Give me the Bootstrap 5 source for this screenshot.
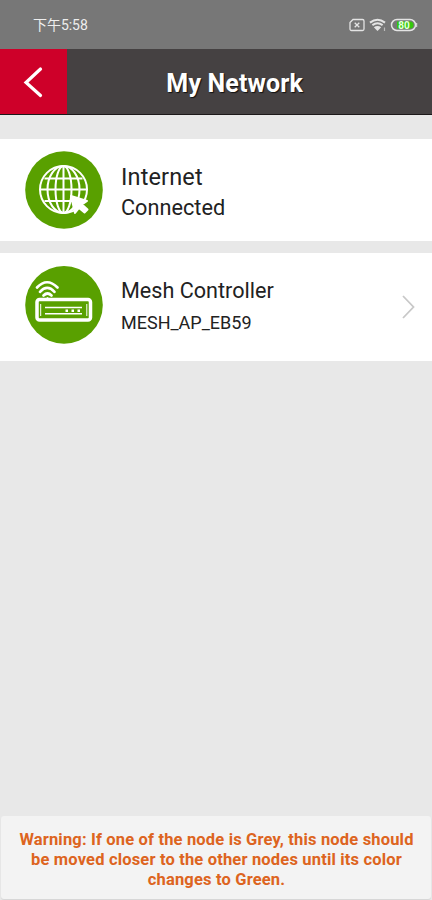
<!DOCTYPE html>
<html lang="en">
<head>
<meta charset="utf-8">
<meta name="viewport" content="width=device-width, initial-scale=1">
<title>My Network</title>
<link href="https://cdn.jsdelivr.net/npm/bootstrap@5.3.0/dist/css/bootstrap.min.css" rel="stylesheet">
<style>
body{font-family:Roboto,"Noto Sans CJK SC",sans-serif;background:#e8e8e8;color:#222;height:900px;overflow:hidden}
.status-bar{height:49px;background:#777;color:#eee;padding:1px 14px 0 33px;font-size:14px}
.status-bar .clock{letter-spacing:-.05px}
.title-bar{height:66px;background:#454142;border-bottom:1.5px solid #1c1819}
.back-btn{width:66.500px;height:65px;background:#ce0029}
.title-bar h1{font-size:25px;font-weight:700;margin:4px 29px 0 0;text-shadow:1px 1px 1px #111;letter-spacing:.15px}
.node-internet{height:102px;margin-top:24px;padding:0 16px 0 25px}
.node-mesh{height:108px;margin-top:12px;padding:0 16px 0 25px}
.node-disc{width:78px;height:78px}
.node-text{margin-left:18px}
.node-internet .node-text{padding-top:3px}
.node-mesh .node-text{padding-bottom:1px}
.node-name{font-size:23.5px;line-height:32px;letter-spacing:.15px}
.node-state{font-size:21.7px;line-height:30px}
.mesh-name{font-size:21.6px;line-height:32px}
.node-ssid{font-size:18px;line-height:32px}
.warning-box{margin:0 1px 1px;height:83px;background:#f3f3f3;color:#dd6420;font-size:16.5px;letter-spacing:.17px;font-weight:700;line-height:20px;padding:14px 0 0 1px;border-radius:3px;box-shadow:0 1px 1px #d5d5d5}
</style>
</head>
<body class="d-flex flex-column">
<div class="status-bar d-flex align-items-center justify-content-between flex-shrink-0">
  <span class="clock">下午5:58</span>
  <svg width="70" height="16" viewBox="0 0 70 16" fill="none" stroke="#e4e4e4">
    <path d="M5 2.500H14.500a1.500 1.500 0 0 1 1.500 1.500V12a1.500 1.500 0 0 1-1.500 1.500H3.500A1.500 1.500 0 0 1 2 12V5.500Z" stroke-width="1.300"/>
    <path d="M6.700 5.700l4.600 4.600M11.300 5.700l-4.600 4.600" stroke-width="1.300"/>
    <path d="M22 5.600Q29.500 0 37 5.600M24.400 8.100Q29.500 4.300 34.600 8.100" stroke-width="2"/>
    <path d="M25.800 10.200Q29.500 7.600 33.200 10.200L29.500 14Z" fill="#e4e4e4" stroke="none"/>
    <path d="M36.500 10.500v3.500" stroke="#bbb" stroke-width="1.200"/>
    <rect x="43.500" y="2.500" width="24" height="11" rx="5.500" stroke-width="1.500"/>
    <path d="M49 4.500H62a3.500 3.500 0 0 1 0 7H49Z" fill="#35c80c" stroke="none"/>
    <path d="M68.700 6v4" stroke-width="1"/>
    <text x="56" y="11.500" text-anchor="middle" font-family="Roboto,sans-serif" font-size="10" font-weight="700" fill="#e8ffe0" stroke="none">80</text>
  </svg>
</div>
<header class="title-bar d-flex align-items-center text-white flex-shrink-0">
  <a class="back-btn d-flex align-items-center justify-content-center flex-shrink-0 align-self-start" href="#" aria-label="Back">
    <svg width="20" height="32" viewBox="0 0 20 32" fill="none" stroke="#fff" stroke-width="3.200" stroke-linecap="round"><path d="M17.500 3L3 16.500L17.500 29.500"/></svg>
  </a>
  <h1 class="flex-grow-1 text-center">My Network</h1>
</header>
<main class="flex-grow-1">
  <section class="node-internet bg-white d-flex align-items-center">
    <svg class="node-disc flex-shrink-0" viewBox="0 0 78 78" fill="none" stroke="#fff" stroke-width="2">
      <circle cx="39" cy="39" r="38.800" fill="#59a000" stroke="none"/>
      <circle cx="38.500" cy="38.500" r="23.500"/>
      <ellipse cx="38.500" cy="38.500" rx="16" ry="23.500"/>
      <ellipse cx="38.500" cy="38.500" rx="8" ry="23.500"/>
      <path d="M38.500 15v47M15 38.500h47M19.500 27.500h38M19.500 50h33"/>
      <path d="M46 45l16 5-5 3.500 5.500 5-3 3-5.500-4.500-4 5Z" fill="#fff" stroke-linejoin="round"/>
    </svg>
    <div class="node-text">
      <div class="node-name">Internet</div>
      <div class="node-state">Connected</div>
    </div>
  </section>
  <section class="node-mesh bg-white d-flex align-items-center">
    <svg class="node-disc flex-shrink-0 mb-1" viewBox="0 0 78 78" fill="none" stroke="#fff">
      <circle cx="39" cy="38.900" r="38.800" fill="#59a000" stroke="none"/>
      <path d="M12 21.500Q22 11 32.500 21.500M15 25.800Q22.200 18 29.500 25.800M18.500 29.500Q22.500 25.500 26.500 29.500" stroke-width="2.700" stroke-linecap="round"/>
      <path d="M20.500 33l2-1.500 2 1.500Z" fill="#fff"/>
      <rect x="12" y="33.500" width="53.500" height="20.500" rx="2.500" stroke-width="3.500"/>
      <path d="M20 41.500H57M20 47.800H57" stroke-width="1.500"/>
      <path d="M40.500 44.700h2.500M46.500 44.700h2.500M52.500 44.700h2.500" stroke-width="2.600"/>
      <path d="M15.700 38v12M61.800 38v12" stroke-width="1"/>
    </svg>
    <div class="node-text flex-grow-1">
      <div class="mesh-name">Mesh Controller</div>
      <div class="node-ssid">MESH_AP_EB59</div>
    </div>
    <svg width="15" height="26" viewBox="0 0 15 26" fill="none" stroke="#c8c8c8" stroke-width="1.800"><path d="M2 2L12.500 13L2 24"/></svg>
  </section>
</main>
<footer class="warning-box text-center flex-shrink-0">Warning: If one of the node is Grey, this node should<br>be moved closer to the other nodes until its color<br>changes to Green.</footer>
<script src="https://cdn.jsdelivr.net/npm/bootstrap@5.3.0/dist/js/bootstrap.bundle.min.js"></script>
</body>
</html>
